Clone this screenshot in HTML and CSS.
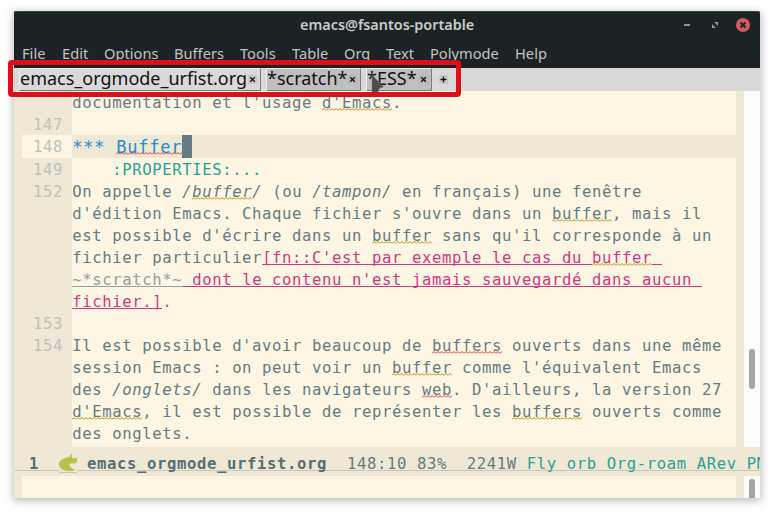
FILE: index.html
```
<!DOCTYPE html>
<html lang="fr">
<head>
<meta charset="utf-8">
<title>emacs@fsantos-portable</title>
<link rel="stylesheet" href="styles.css">
</head>
<body>
<div class="window">
  <header class="titlebar">
    <span class="title">emacs@fsantos-portable</span>
    <svg class="controls" width="68" height="14" viewBox="0 0 68 14">
      <path d="M0 7h6" stroke="#8f9696" stroke-width="2"/>
      <path d="M30 4h4v4zM28 6v4h4z" fill="#8f9696"/>
      <circle cx="59" cy="7" r="7" fill="#d35a60"/>
      <path d="M56.500 4.500l5 5M61.500 4.500l-5 5" stroke="#1d2324" stroke-width="1.800"/>
    </svg>
  </header>
  <nav class="menu"><span class="m-file">File</span><span class="m-edit">Edit</span><span class="m-options">Options</span><span class="m-buffers">Buffers</span><span class="m-tools">Tools</span><span class="m-table">Table</span><span class="m-org">Org</span><span class="m-text">Text</span><span class="m-poly">Polymode</span><span>Help</span></nav>
  <div class="tabs">
    <div class="tab active"><span class="label">emacs_orgmode_urfist.org</span><svg class="close" width="9" height="9" viewBox="0 0 9 9"><path d="M2.200 2.200l4.600 4.600M6.800 2.200L2.200 6.800"/></svg></div>
    <div class="tab scratch"><span class="label">*scratch*</span><svg class="close" width="9" height="9" viewBox="0 0 9 9"><path d="M2.200 2.200l4.600 4.600M6.800 2.200L2.200 6.800"/></svg></div>
    <div class="tab ess"><span class="label">*ESS*</span><svg class="close" width="9" height="9" viewBox="0 0 9 9"><path d="M2.200 2.200l4.600 4.600M6.800 2.200L2.200 6.800"/></svg></div>
    <svg class="plus" width="9" height="9" viewBox="0 0 9 9"><path d="M4.500 1.500v6M1.500 4.500h6"/></svg>
  </div>
  <main class="editor">
    <div class="lines">
      <div class="row"><span class="num"></span><code>documentation et l'usage <u class="warn">d'Emacs</u>.</code></div>
      <div class="row"><span class="num">147</span><code></code></div>
      <div class="row current"><span class="num">148</span><code><span class="heading">*** <u class="err">Buffer</u></span><span class="cursor"> </span></code></div>
      <div class="row"><span class="num">149</span><code class="props">    :PROPERTIES:...</code></div>
      <div class="row"><span class="num">152</span><code>On appelle <i>/<u class="warn">buffer</u>/</i> (ou <i>/tampon/</i> en français) une fenêtre</code></div>
      <div class="row"><span class="num"></span><code>d'édition Emacs. Chaque fichier s'ouvre dans un <u class="warn">buffer</u>, mais il</code></div>
      <div class="row"><span class="num"></span><code>est possible d'écrire dans un <u class="warn">buffer</u> sans qu'il corresponde à un</code></div>
      <div class="row"><span class="num"></span><code>fichier particulier<span class="note">[fn::C'est par exemple le cas du <u class="warn">buffer</u> </span></code></div>
      <div class="row"><span class="num"></span><code><span class="note verbatim">~*scratch*~</span><span class="note"> dont le contenu n'est jamais sauvegardé dans aucun </span></code></div>
      <div class="row"><span class="num"></span><code><span class="note">fichier.]</span>.</code></div>
      <div class="row"><span class="num">153</span><code></code></div>
      <div class="row"><span class="num">154</span><code>Il est possible d'avoir beaucoup de <u class="err">buffers</u> ouverts dans une même</code></div>
      <div class="row"><span class="num"></span><code>session Emacs : on peut voir un <u class="warn">buffer</u> comme l'équivalent Emacs</code></div>
      <div class="row"><span class="num"></span><code>des <i>/onglets/</i> dans les navigateurs <u class="err">web</u>. D'ailleurs, la version 27</code></div>
      <div class="row"><span class="num"></span><code><u class="warn">d'Emacs</u>, il est possible de représenter les <u class="warn">buffers</u> ouverts comme</code></div>
      <div class="row last"><span class="num"></span><code>des onglets.</code></div>
    </div>
    <div class="scroll"><div class="thumb"></div></div>
  </main>
  <div class="modeline"><b class="winno">1</b><svg class="unicorn" width="18" height="21" viewBox="0 0 18 21"><path class="bg" d="M0 16h18v4H0z"/><path class="base" d="M0 19.500h18"/><path d="M13 0l-.300 4.200L14 5.400l4-.600v4.400l-2 1.300-4-.200c-2.200.800-2.200 2.200-.600 3.600l4 3-.600 1.100h-4.300C4.500 18 0 15.500 0 11.500 0 8 3 6 6.500 5.300l1-.8 2.700-.2z"/></svg><b class="file">emacs_orgmode_urfist.org</b><span class="pos">  148:10 83%  2241W </span><span class="modes">Fly orb Org-roam ARev PM</span></div>
  <div class="mini"><div class="scroll"><div class="thumb"></div></div></div>
</div>
<svg class="pointer" width="14" height="18" viewBox="0 0 14 18"><path d="M1 0L12.500 12 8.500 13 7 17H1z"/></svg>
<div class="frame"></div>
</body>
</html>
```
FILE: styles.css
```
* { box-sizing: border-box; }
body { margin: 0; width: 774px; height: 515px; overflow: hidden; background: #fff; padding: 11px 14px; font-family: "Noto Sans", sans-serif; }
.window { width: 746px; height: 487px; overflow: hidden; border-radius: 2px 2px 0 0; background: #fdf6e3; box-shadow: 0 2px 9px 1px rgba(0,0,0,.26); display: flex; flex-direction: column; }
.titlebar { height: 30px; flex: none; background: #1d2324; border-top: 1px solid #3a4142; display: grid; grid-template-columns: 286px 1fr 77px; align-items: center; color: #c8cccc; }
.title { grid-column: 2; font-size: 14.400px; font-weight: 600; line-height: 26px; margin-top: -4px; white-space: nowrap; }
.controls { margin-top: -3px; margin-left: 1px; }
.menu { height: 27px; flex: none; background: #1d2324; color: #c0c4c4; font-size: 14.670px; line-height: 25px; padding-left: 8px; display: flex; white-space: nowrap; }
.m-file { width: 40px; } .m-edit { width: 42px; } .m-options { width: 70px; } .m-buffers { width: 66px; } .m-tools { width: 52px; }
.m-table { width: 52px; } .m-org { width: 42px; } .m-text { width: 44px; } .m-poly { width: 85px; }
.tabs { height: 23px; flex: none; background: #d9d9d9; padding-left: 5px; display: flex; gap: 5px; color: #111; }
.tab { height: 23px; display: flex; align-items: center; justify-content: space-between; background: #bfbfbf; border: 1px solid #eee; border-right-color: #7b7b7b; border-bottom: 1px solid #7b7b7b; padding-right: 3px; font-size: 18px; line-height: 20px; white-space: nowrap; }
.label { margin-top: -3px; }
.active { width: 242px; background: #d9d9d9; }
.scratch { width: 95px; } .ess { width: 66px; }
.close, .plus { flex: none; background: #b8b8b8; stroke: #111; stroke-width: 1.300; fill: none; }
.active .close, .plus { background: #c9c9c9; }
.plus { margin: 7px 0 0 2px; }
.editor { height: 356px; flex: none; display: flex; }
.lines { width: 730px; background: #fdf6e3; border-left: 8px solid #eee8d5; border-right: 8px solid #eee8d5; }
.row { height: 22px; display: flex; line-height: 24px; font-family: "DejaVu Sans Mono", monospace; font-size: 15.600px; letter-spacing: .608px; color: #657b83; }
.num { width: 50px; flex: none; background: #eee8d5; color: #bcc3bc; padding-right: 9px; text-align: right; }
code { flex: 1; font: inherit; white-space: pre; padding-left: .2px; }
.current { height: 23px; background: #eee8d5; line-height: 25px; }
.current .num { background: #fdf6e3; }
.last { height: 25px; }
.heading { color: #268bd2; font-size: 17px; letter-spacing: .766px; }
.props { color: #2aa198; }
.cursor { display: inline-block; width: 10px; height: 23px; background: #657b83; vertical-align: top; }
u { display: inline-block; height: 22px; vertical-align: top; text-decoration: none; background-repeat: repeat-x; background-position: 0 17px; background-size: 4px 3px; }
.warn { background-image: url("data:image/svg+xml,%3Csvg xmlns='http://www.w3.org/2000/svg' width='4' height='3'%3E%3Cpath d='M0 2.500L2 .5l2 2' fill='none' stroke='%23b58900'/%3E%3C/svg%3E"); }
.err { background-image: url("data:image/svg+xml,%3Csvg xmlns='http://www.w3.org/2000/svg' width='4' height='3'%3E%3Cpath d='M0 2.500L2 .5l2 2' fill='none' stroke='%23dc322f'/%3E%3C/svg%3E"); }
.note { color: #d33682; text-decoration: underline 1px; text-underline-offset: 1px; text-decoration-skip-ink: none; }
.verbatim { color: #93a1a1; }
.scroll { width: 16px; background: #fcfcfc; }
.thumb { width: 6px; height: 40px; margin: 258px 0 0 5px; border-radius: 3px; background: #a3a6a6; }
.modeline { height: 29px; flex: none; display: flex; overflow: hidden; font-family: "DejaVu Sans Mono", monospace; font-size: 15.600px; letter-spacing: .608px; line-height: 34px; color: #657b83; white-space: pre; background: linear-gradient(#c5c8bb, #c5c8bb) 1px 23px / 100% 1px no-repeat #eee8d5; }
.modeline > * { flex: none; }
.modeline b { color: #586e75; }
.winno { width: 30px; padding-left: 15px; }
.unicorn { width: 18px; margin: 6px 10px 0 15px; fill: #b3c34d; }
.unicorn .bg { fill: #eee8d5; }
.unicorn .base { stroke: #c5c8bb; }
.modes { color: #2aa198; }
.mini { height: 22px; display: flex; justify-content: flex-end; background: linear-gradient(90deg, #eee8d5 8px, #fdf6e3 8px 722px, #eee8d5 722px); }
.mini .thumb { margin-top: 3px; }
.frame { position: absolute; left: 8px; top: 60px; width: 453px; height: 37px; border: 5px solid #dc1018; border-radius: 4px; }
.pointer { position: absolute; left: 371px; top: 75px; fill: #4b4b4b; stroke: #777; stroke-width: .6px; }
```
